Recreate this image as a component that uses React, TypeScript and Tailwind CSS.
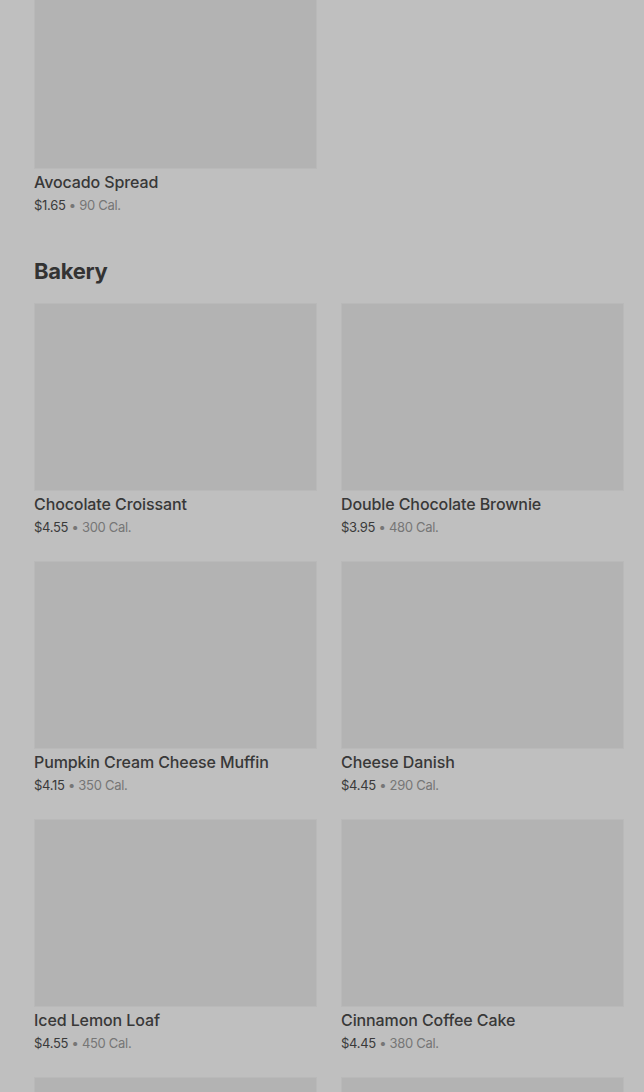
import React from 'react'

type Item = { name: string; price: string; cal: string }

const bakery: Item[] = [
  { name: 'Chocolate Croissant', price: '$4.55', cal: '300 Cal.' },
  { name: 'Double Chocolate Brownie', price: '$3.95', cal: '480 Cal.' },
  { name: 'Pumpkin Cream Cheese Muffin', price: '$4.15', cal: '350 Cal.' },
  { name: 'Cheese Danish', price: '$4.45', cal: '290 Cal.' },
  { name: 'Iced Lemon Loaf', price: '$4.55', cal: '450 Cal.' },
  { name: 'Cinnamon Coffee Cake', price: '$4.45', cal: '380 Cal.' },
]

function Thumb() {
  return <div className="h-[188px] w-full bg-[#b3b3b3] border border-[#b9b9b9]" />
}

function Card({ item }: { item: Item }) {
  return (
    <div className="flex flex-col">
      <Thumb />
      <div className="mt-[3px] text-[16px] leading-[20px] font-medium tracking-[-0.1px] text-[#383838]">
        {item.name}
      </div>
      <div className="mt-[4px] text-[13px] leading-[18px] tracking-[-0.3px] text-[#3a3a3a]">
        {item.price}
        <span className="text-[#767676]"> • {item.cal}</span>
      </div>
    </div>
  )
}

export default function App() {
  return (
    <div
      className="h-screen w-full bg-[#bfbfbf] overflow-hidden"
      style={{ fontFamily: 'Inter, "Noto Sans", sans-serif' }}
    >
      <div className="-mt-[19px] pl-[34px] pr-[20px] flex flex-col">
        <div className="grid grid-cols-2 gap-x-[24px]">
          <Card item={{ name: 'Avocado Spread', price: '$1.65', cal: '90 Cal.' }} />
        </div>

        <h2 className="mt-[43px] text-[22px] leading-[28px] font-bold tracking-[-0.3px] text-[#333333]">
          Bakery
        </h2>

        <div className="mt-[18px] grid grid-cols-2 gap-x-[24px] gap-y-[25px]">
          {bakery.map((it) => (
            <Card key={it.name} item={it} />
          ))}
          <Thumb />
          <Thumb />
        </div>
      </div>
    </div>
  )
}
